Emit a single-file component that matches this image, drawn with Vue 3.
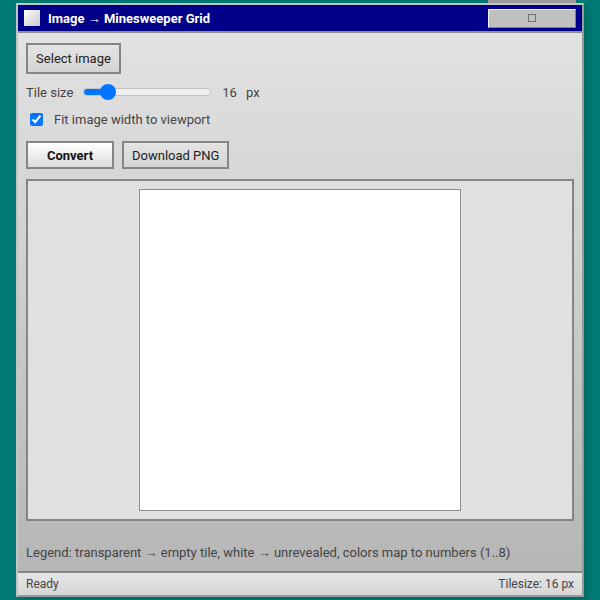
<script setup>
import { computed, ref } from "vue";

const tileSize = ref(16);
const fitWidth = ref(true);

const sliderFill = computed(() => {
  const percent = ((tileSize.value - 8) / (64 - 8)) * 100;
  return { "--fill": `${percent}%` };
});
</script>

<template>
  <div class="desktop">
    <span class="top_strip"></span>
    <div class="window">
      <div class="titlebar">
        <span class="app_icon"></span>
        <span class="title">Image → Minesweeper Grid</span>
        <button class="max_btn"><span class="max_glyph"></span></button>
      </div>
      <div class="content">
        <button class="btn select_btn">Select image</button>
        <div class="size_row">
          <label class="size_label">Tile size</label>
          <input v-model="tileSize" class="slider" :style="sliderFill" type="range" min="8" max="64" />
          <span class="size_value">{{ tileSize }}</span>
          <span class="size_unit">px</span>
        </div>
        <label class="fit_row">
          <input v-model="fitWidth" class="fit_check" type="checkbox" />
          <span>Fit image width to viewport</span>
        </label>
        <div class="actions">
          <button class="btn convert_btn">Convert</button>
          <button class="btn download_btn">Download PNG</button>
        </div>
        <div class="viewport">
          <div class="canvas"></div>
        </div>
        <p class="legend">Legend: transparent → empty tile, white → unrevealed, colors map to numbers (1..8)</p>
      </div>
      <div class="statusbar">
        <span>Ready</span>
        <span>Tilesize: {{ tileSize }} px</span>
      </div>
    </div>
  </div>
</template>

<style scoped>
.desktop {
  position: relative;
  width: 600px;
  height: 600px;
  box-sizing: border-box;
  padding: 3px 16px 3px 16px;
  background: #007a73;
  font-family: Roboto, sans-serif;
  font-size: 13px;
  color: #444444;
}

.top_strip {
  position: absolute;
  top: 0;
  left: 488px;
  width: 88px;
  height: 3px;
  background: #9a9a9a;
}

.window {
  height: 100%;
  box-sizing: border-box;
  display: flex;
  flex-direction: column;
  border: 2px solid #9a9a9a;
  border-left-color: #c4c4c4;
  border-top-color: #c4c4c4;
  background: #c8c8c8;
  box-shadow: 4px 3px 6px rgba(0, 0, 0, 0.12);
}

.titlebar {
  height: 26px;
  flex-shrink: 0;
  display: flex;
  align-items: center;
  padding: 0 6px 0 6px;
  background: #000088;
  border-bottom: 2px solid #8f8f8f;
}

.app_icon {
  width: 16px;
  height: 16px;
  background: linear-gradient(135deg, #ffffff, #c8c8c8);
}

.title {
  margin-left: 8px;
  padding-top: 1px;
  font-size: 13px;
  font-weight: 700;
  color: #ffffff;
}

.max_btn {
  margin-left: auto;
  width: 88px;
  height: 19px;
  padding: 0;
  display: flex;
  align-items: center;
  justify-content: center;
  background: #c0c0c0;
  border: 1px solid #808080;
  border-top-color: #f0f0f0;
  border-left-color: #f0f0f0;
}

.max_glyph {
  width: 8px;
  height: 8px;
  box-sizing: border-box;
  border: 1px solid #707070;
}

.content {
  flex: 1;
  min-height: 0;
  display: flex;
  flex-direction: column;
  padding: 10px 8px 0 8px;
  background: linear-gradient(#e2e2e2, #b6b6b6);
}

.btn {
  height: 31px;
  padding: 0 8px;
  box-sizing: border-box;
  font-family: inherit;
  font-size: 13px;
  white-space: nowrap;
  color: #222222;
  background: linear-gradient(#e4e4e4, #d4d4d4);
  border: 2px solid #858585;
}

.select_btn {
  align-self: flex-start;
  width: 95px;
}

.size_row {
  display: flex;
  align-items: center;
  margin-top: 9px;
  height: 18px;
}

.slider {
  -webkit-appearance: none;
  appearance: none;
  width: 128px;
  height: 16px;
  margin: 0 0 0 10px;
  background: transparent;
}

.slider::-webkit-slider-runnable-track {
  height: 8px;
  box-sizing: border-box;
  border: 1px solid #c4c4c4;
  border-radius: 4px;
  background: linear-gradient(#0075ff, #0075ff) no-repeat left / var(--fill) 100%, #efefef;
}

.slider::-webkit-slider-thumb {
  -webkit-appearance: none;
  width: 16px;
  height: 16px;
  margin-top: -5px;
  border-radius: 50%;
  background: #0075ff;
}

.size_value {
  margin-left: 11px;
}

.size_unit {
  margin-left: 9px;
}

.fit_row {
  display: flex;
  align-items: center;
  margin-top: 9px;
  height: 18px;
  padding-left: 4px;
}

.fit_check {
  width: 13px;
  height: 13px;
  margin: 0 11px 0 0;
}

.actions {
  display: flex;
  gap: 8px;
  margin-top: 13px;
}

.actions .btn {
  height: 28px;
}

.convert_btn {
  width: 88px;
  font-weight: 700;
  color: #111111;
  background: linear-gradient(#ffffff, #dcdcdc);
}

.download_btn {
  width: 107px;
}

.viewport {
  flex-shrink: 0;
  height: 342px;
  box-sizing: border-box;
  margin-top: 10px;
  display: flex;
  justify-content: center;
  align-items: center;
  background: #e0e0e0;
  border: 2px solid #858585;
}

.canvas {
  width: 322px;
  height: 322px;
  box-sizing: border-box;
  background: #ffffff;
  border: 1px solid #8a8a8a;
}

.legend {
  margin: 24px 0 0 0;
  font-size: 13px;
  line-height: 16px;
}

.statusbar {
  height: 24px;
  flex-shrink: 0;
  box-sizing: border-box;
  display: flex;
  align-items: center;
  justify-content: space-between;
  padding: 0 8px;
  font-size: 12px;
  background: linear-gradient(#e6e6e6, #d6d6d6);
  border-top: 2px solid #858585;
}
</style>
